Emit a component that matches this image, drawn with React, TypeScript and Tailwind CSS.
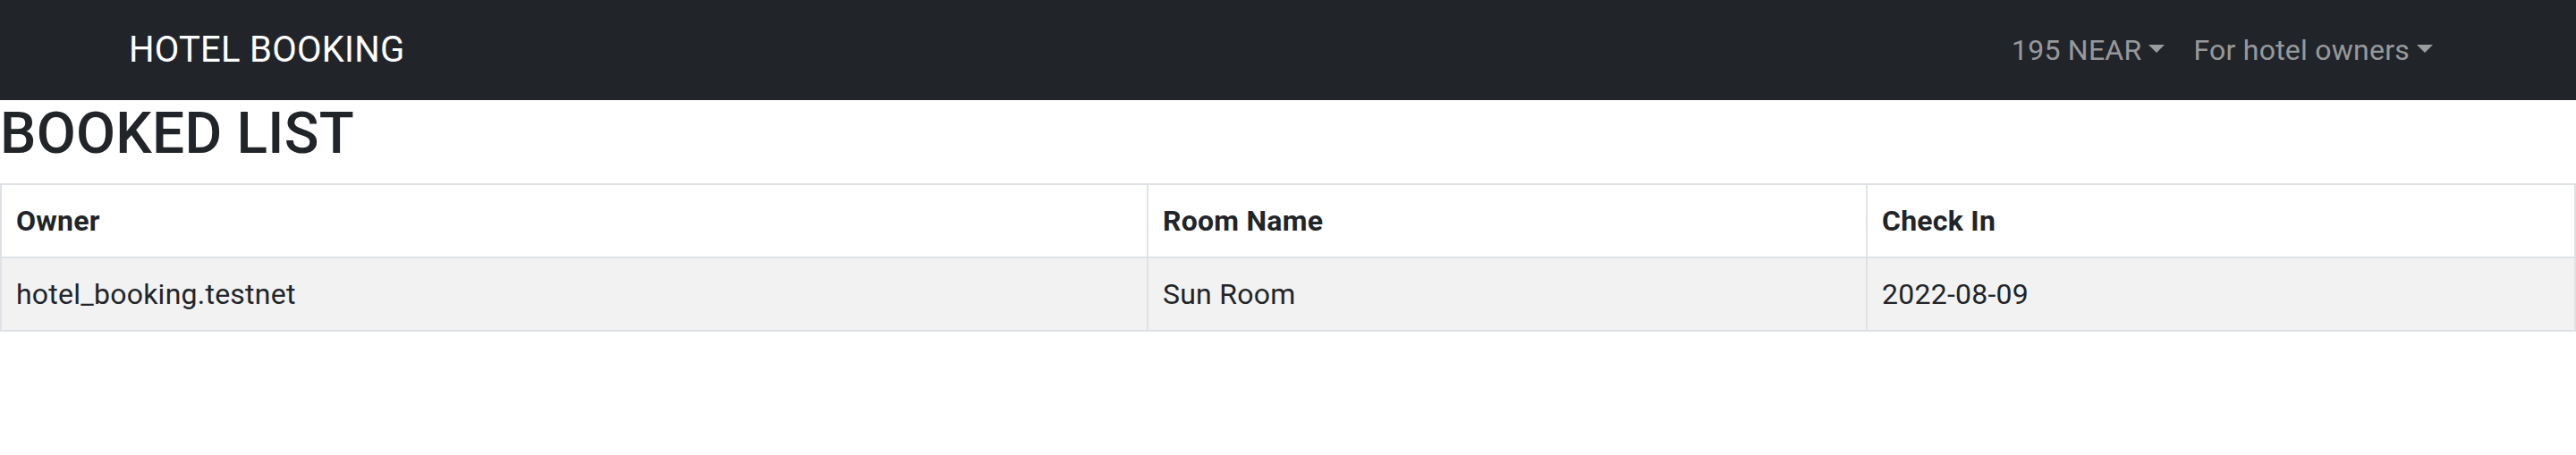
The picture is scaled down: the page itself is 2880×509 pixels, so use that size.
const bookings = [
  { owner: "hotel_booking.testnet", room: "Sun Room", checkIn: "2022-08-09" },
];

const Caret = () => (
  <span className="ml-[8px] inline-block h-0 w-0 border-x-[9.6px] border-t-[9.6px] border-b-0 border-x-transparent border-t-current align-[8px]" />
);

const App = () => {
  return (
    <div className="min-h-[509px] bg-white font-['Roboto','Liberation_Sans',sans-serif] tracking-[0.015em] text-[#212529]">
      {/* Navbar */}
      <nav className="bg-[#212529] py-[16px]">
        <div className="mx-auto flex w-[2640px] items-center justify-between px-[24px]">
          <a className="py-[10px] text-[40px] leading-[60px] text-white">HOTEL BOOKING</a>
          <ul className="flex items-center">
            <li>
              <a className="block px-[16px] py-[16px] text-[32px] leading-[48px] text-[rgba(255,255,255,0.55)]">
                195 NEAR
                <Caret />
              </a>
            </li>
            <li>
              <a className="block px-[16px] py-[16px] text-[32px] leading-[48px] text-[rgba(255,255,255,0.55)]">
                For hotel owners
                <Caret />
              </a>
            </li>
          </ul>
        </div>
      </nav>

      {/* Booked list */}
      <h2 className="mb-[16px] text-[64px] font-medium leading-[1.2]">BOOKED LIST</h2>
      <table className="w-full table-fixed border-separate border-spacing-0 text-left text-[32px] leading-[48px]">
        <colgroup>
          <col className="w-[1282px]" />
          <col className="w-[804px]" />
          <col />
        </colgroup>
        <thead>
          <tr>
            <th className="border-l-2 border-t-2 border-[#dee2e6] p-[16px] font-bold">Owner</th>
            <th className="border-l-2 border-t-2 border-[#dee2e6] p-[16px] font-bold">Room Name</th>
            <th className="border-x-2 border-t-2 border-[#dee2e6] p-[16px] font-bold">Check In</th>
          </tr>
        </thead>
        <tbody>
          {bookings.map((b) => (
            <tr key={b.owner} className="bg-[#f2f2f2]">
              <td className="border-b-2 border-l-2 border-t-2 border-[#dee2e6] p-[16px]">{b.owner}</td>
              <td className="border-b-2 border-l-2 border-t-2 border-[#dee2e6] p-[16px]">{b.room}</td>
              <td className="border-2 border-[#dee2e6] p-[16px]">{b.checkIn}</td>
            </tr>
          ))}
        </tbody>
      </table>
    </div>
  );
};

export default App;
